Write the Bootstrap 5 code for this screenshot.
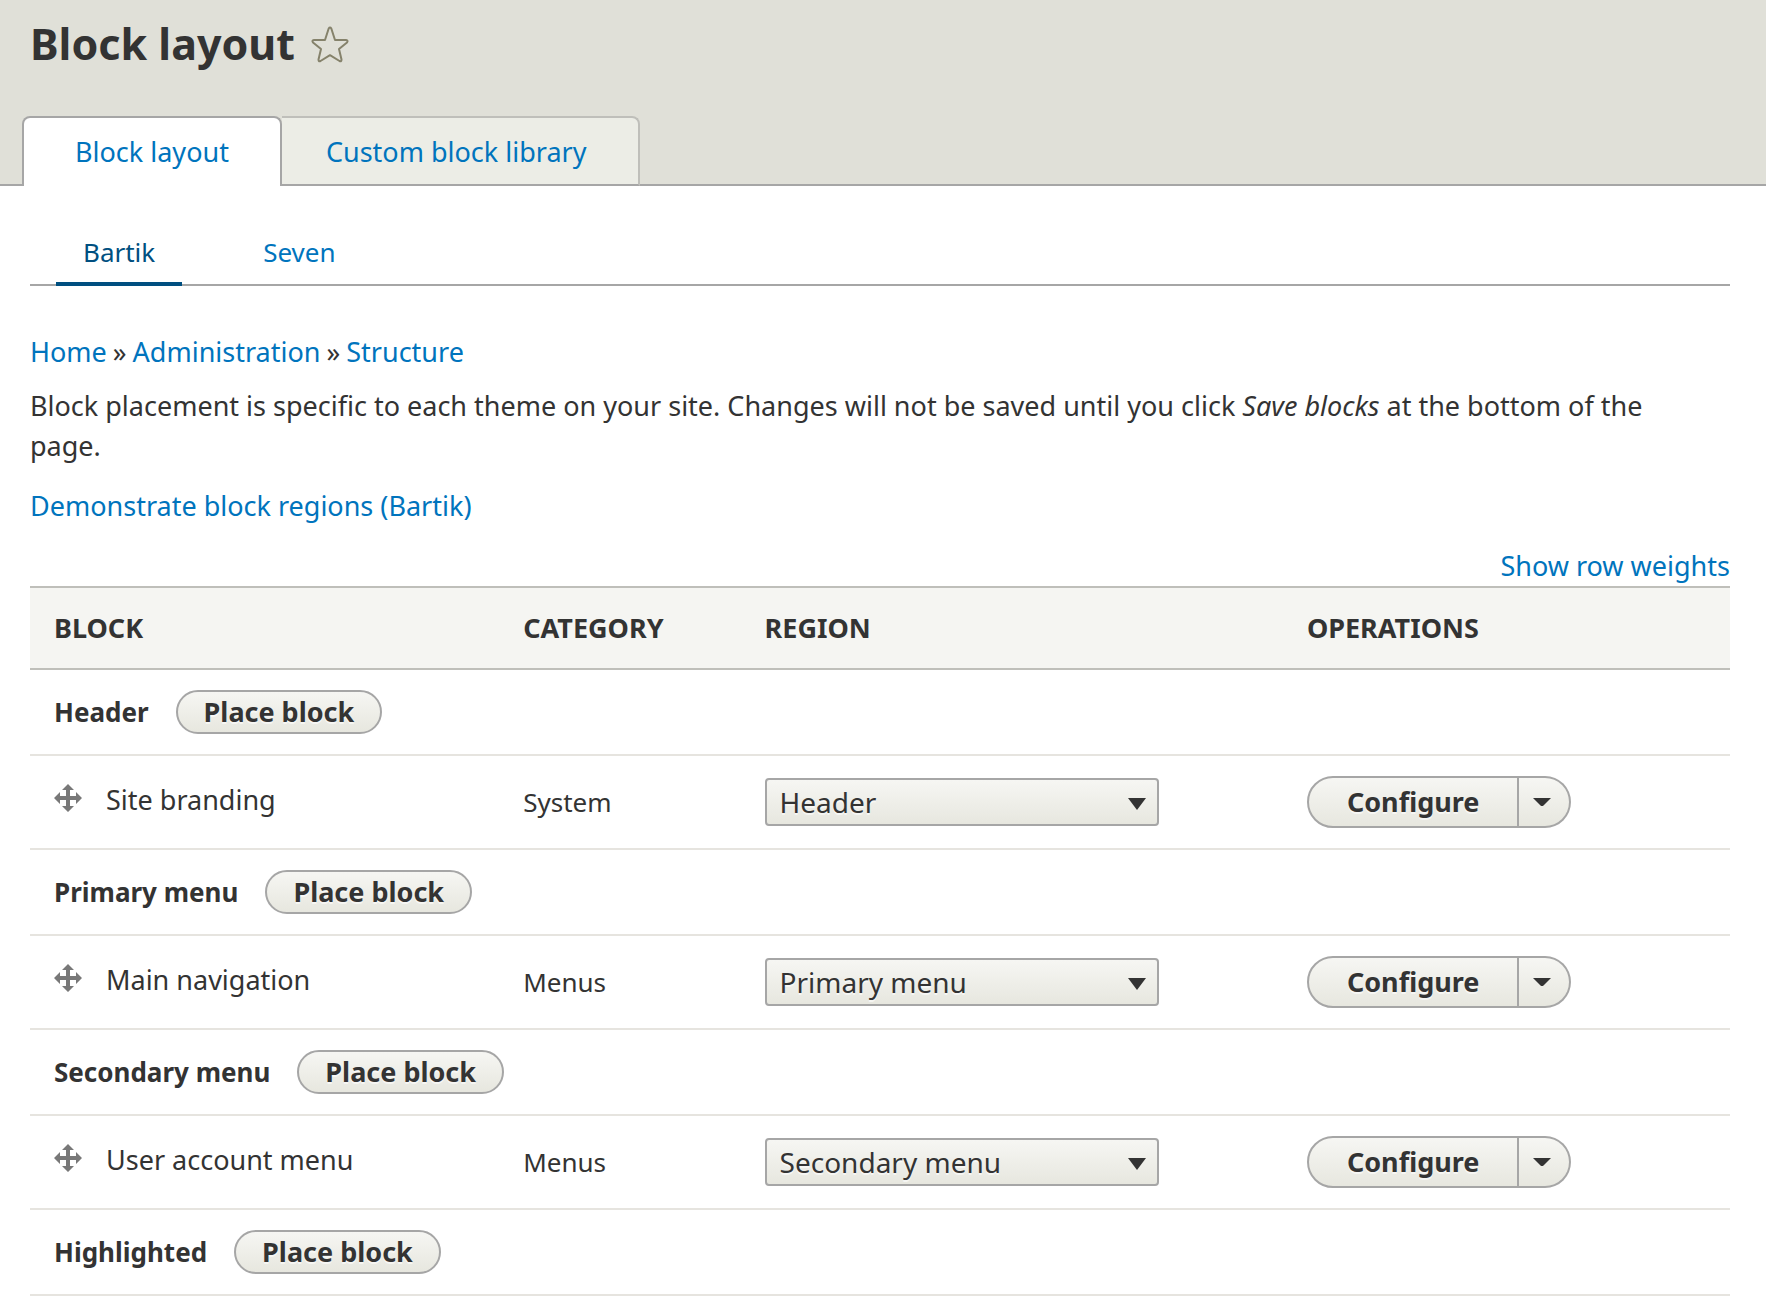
<!DOCTYPE html>
<html lang="en">
<head>
<meta charset="utf-8">
<meta name="viewport" content="width=device-width, initial-scale=1">
<title>Block layout</title>
<link href="https://cdn.jsdelivr.net/npm/bootstrap@5.3.0/dist/css/bootstrap.min.css" rel="stylesheet">
<style>
  body { font-family: "Lucida Grande", "Noto Sans", "Open Sans", sans-serif; font-size: 27px; line-height: 40px; color: #333; background: #fff; }
  a { color: #0074bd; text-decoration: none; }
  a:hover { text-decoration: underline; }
  .page-head { background: #e0e0d8; border-bottom: 2px solid #a6a6a6; padding: 14px 22px 0; }
  .page-title { font-size: 43px; line-height: 60px; font-weight: 700; padding-left: 8px; margin-bottom: 42px; }
  .star-btn { background: none; border: 0; padding: 0; line-height: 0; }
  .primary-tabs { margin-bottom: -2px; border: 0; }
  .primary-tabs .nav-link { height: 70px; padding: 14px 52px 0 44px; border: 2px solid #bfbfba; border-left: 0; border-bottom-color: #a6a6a6; border-radius: 0 8px 0 0; background: #ecede6; color: #0074bd; margin: 0; }
  .primary-tabs .nav-link.active { background: #fff; border: 2px solid #a6a6a6; border-bottom: 0; border-radius: 8px 8px 0 0; padding: 14px 51px 0; color: #0074bd; }
  .page-body { padding: 32px 36px 0 30px; }
  .theme-tabs { font-size: 26px; border-bottom: 2px solid #a6a6a6; padding-left: 26px; gap: 54px; margin-bottom: 46px; }
  .theme-tabs .nav-link { padding: 14px 27px 10px; margin-bottom: -2px; border-bottom: 4px solid transparent; color: #0074bd; }
  .theme-tabs .nav-link.active { color: #004f80; border-color: #004f80; border-radius: 4px 4px 0 0; }
  .crumbs { --bs-breadcrumb-divider: "»"; --bs-breadcrumb-item-padding-x: 6px; --bs-breadcrumb-divider-color: #333; --bs-breadcrumb-font-size: 27px; margin-bottom: 14px; }
  .help-text { margin-bottom: 20px; padding-right: 36px; }
  .block-table { table-layout: fixed; margin: 0; --bs-table-color: #333; font-size: 26px; }
  .block-table th, .block-table td { padding: 0 24px; vertical-align: middle; border-bottom: 2px solid #e6e4df; }
  .block-table thead th { height: 82px; background: #f5f5f2; border-top: 2px solid #bfbfba; border-bottom-color: #bfbfba; text-transform: uppercase; font-size: 27px; font-weight: 700; }
  .c-block { width: 27.6%; } .c-cat { width: 14.2%; } .c-region { width: 31.9%; } .c-ops { width: 26.3%; }
  .region-row th { height: 86px; font-weight: 700; }
  .region-line { gap: 27px; }
  .block-row td { height: 94px; }
  .block-name { gap: 24px; font-size: 27px; }
  .gray-btn { color: #333; font-size: 27px; font-weight: 700; background: linear-gradient(#f6f6f3, #e7e7df); border: 2px solid #a6a6a6; text-shadow: 0 2px #fff9; border-radius: 40px; }
  .place-btn { height: 44px; line-height: 38px; padding: 0 26px; }
  .ops-btn { height: 52px; line-height: 44px; padding: 2px 38px; }
  .btn-group > .ops-toggle.btn:not(:first-child) { padding: 0 18px 0 14px; line-height: 0; border-left: 0; margin-left: 0; }
  .region-select { appearance: none; width: 100%; max-width: 394px; height: 48px; padding: 0 13px; font-size: 28px; line-height: 44px; color: #333; border: 2px solid #a6a6a6; border-radius: 4px; text-shadow: 0 2px #fff9;
    background: url("data:image/svg+xml,%3Csvg xmlns='http://www.w3.org/2000/svg' width='18' height='12'%3E%3Cpath d='M0 0h18L9 12z' fill='%23333'/%3E%3C/svg%3E") no-repeat right 11px top 18px, linear-gradient(#f6f6f3, #e7e7df); }
</style>
</head>
<body>
<svg class="d-none">
  <symbol id="move" viewBox="0 0 28 28"><path fill="#787878" d="M14 0 20 6H16V12H22V8L28 14 22 20V16H16V22H20L14 28 8 22H12V16H6V20L0 14 6 8V12H12V6H8z"/></symbol>
  <symbol id="caret" viewBox="0 0 18 9"><path fill="#333" d="M0 0H18L10.500 7.500Q9 8.500 7.500 7.500z"/></symbol>
</svg>
<header class="page-head">
  <h1 class="page-title d-flex align-items-center gap-3">Block layout
    <button class="star-btn" type="button" aria-label="Add to shortcuts"><svg width="38" height="38" viewBox="0 0 38 38" fill="none" stroke="#85826b" stroke-width="2" stroke-linejoin="round"><path d="M17.700 3.500Q19 1.500 20.300 3.500L24 15H35Q37.500 15.500 36 17.500L28 24 30.500 34.500Q30.500 37 28.500 36L19 30.200 9.500 36Q7.500 37 7.500 34.500L10 24 2 17.500Q.500 15.500 3 15H14Z"/></svg></button>
  </h1>
  <nav aria-label="Primary tabs">
    <ul class="nav nav-tabs primary-tabs">
      <li class="nav-item"><a class="nav-link active" aria-current="page" href="#">Block layout</a></li>
      <li class="nav-item"><a class="nav-link" href="#">Custom block library</a></li>
    </ul>
  </nav>
</header>
<main class="page-body">
  <nav aria-label="Secondary tabs">
    <ul class="nav theme-tabs">
      <li class="nav-item"><a class="nav-link active" aria-current="page" href="#">Bartik</a></li>
      <li class="nav-item"><a class="nav-link" href="#">Seven</a></li>
    </ul>
  </nav>
  <nav aria-label="Breadcrumb">
    <ol class="breadcrumb crumbs">
      <li class="breadcrumb-item"><a href="#">Home</a></li>
      <li class="breadcrumb-item"><a href="#">Administration</a></li>
      <li class="breadcrumb-item"><a href="#">Structure</a></li>
    </ol>
  </nav>
  <p class="help-text">Block placement is specific to each theme on your site. Changes will not be saved until you click <em>Save blocks</em> at the bottom of the page.</p>
  <p class="help-text"><a href="#">Demonstrate block regions (Bartik)</a></p>
  <div class="text-end"><a href="#">Show row weights</a></div>
  <table class="table block-table">
    <thead>
      <tr><th class="c-block" scope="col">Block</th><th class="c-cat" scope="col">Category</th><th class="c-region" scope="col">Region</th><th class="c-ops" scope="col">Operations</th></tr>
    </thead>
    <tbody>
      <tr class="region-row"><th colspan="4"><div class="d-flex align-items-center region-line">Header <button class="btn gray-btn place-btn" type="button">Place block</button></div></th></tr>
      <tr class="block-row">
        <td><div class="d-flex align-items-center pb-1 block-name"><svg class="mb-1" width="28" height="28" aria-hidden="true"><use href="#move"/></svg><span>Site branding</span></div></td>
        <td>System</td>
        <td><select class="region-select d-block" aria-label="Region for Site branding"><option>Header</option><option>Primary menu</option><option>Secondary menu</option></select></td>
        <td><div class="btn-group"><button class="btn gray-btn ops-btn" type="button">Configure</button><button class="btn gray-btn ops-toggle" type="button" aria-label="List additional actions"><svg width="18" height="9"><use href="#caret"/></svg></button></div></td>
      </tr>
      <tr class="region-row"><th colspan="4"><div class="d-flex align-items-center region-line">Primary menu <button class="btn gray-btn place-btn" type="button">Place block</button></div></th></tr>
      <tr class="block-row">
        <td><div class="d-flex align-items-center pb-1 block-name"><svg class="mb-1" width="28" height="28" aria-hidden="true"><use href="#move"/></svg><span>Main navigation</span></div></td>
        <td>Menus</td>
        <td><select class="region-select d-block" aria-label="Region for Main navigation"><option>Header</option><option selected>Primary menu</option><option>Secondary menu</option></select></td>
        <td><div class="btn-group"><button class="btn gray-btn ops-btn" type="button">Configure</button><button class="btn gray-btn ops-toggle" type="button" aria-label="List additional actions"><svg width="18" height="9"><use href="#caret"/></svg></button></div></td>
      </tr>
      <tr class="region-row"><th colspan="4"><div class="d-flex align-items-center region-line">Secondary menu <button class="btn gray-btn place-btn" type="button">Place block</button></div></th></tr>
      <tr class="block-row">
        <td><div class="d-flex align-items-center pb-1 block-name"><svg class="mb-1" width="28" height="28" aria-hidden="true"><use href="#move"/></svg><span>User account menu</span></div></td>
        <td>Menus</td>
        <td><select class="region-select d-block" aria-label="Region for User account menu"><option>Header</option><option>Primary menu</option><option selected>Secondary menu</option></select></td>
        <td><div class="btn-group"><button class="btn gray-btn ops-btn" type="button">Configure</button><button class="btn gray-btn ops-toggle" type="button" aria-label="List additional actions"><svg width="18" height="9"><use href="#caret"/></svg></button></div></td>
      </tr>
      <tr class="region-row"><th colspan="4"><div class="d-flex align-items-center region-line">Highlighted <button class="btn gray-btn place-btn" type="button">Place block</button></div></th></tr>
    </tbody>
  </table>
</main>
<script src="https://cdn.jsdelivr.net/npm/bootstrap@5.3.0/dist/js/bootstrap.bundle.min.js"></script>
</body>
</html>
